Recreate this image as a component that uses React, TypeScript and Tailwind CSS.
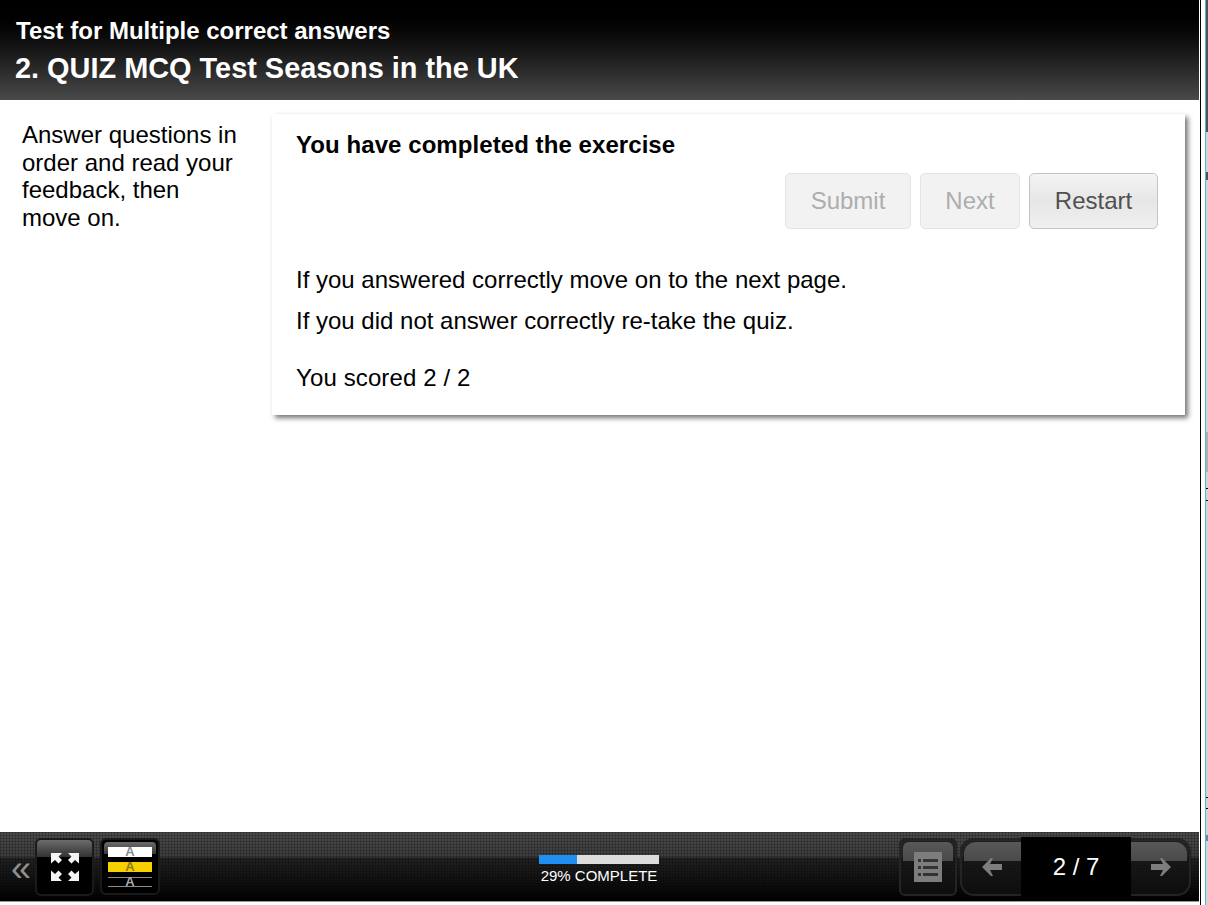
const font = "font-['Liberation_Sans',Arial,sans-serif]";

function ExpandIcon() {
  return (
    <svg width="30" height="30" viewBox="0 0 30 30" fill="#f4f4f4">
      <path d="M1 1h11l-3.500 3.500 3.500 3.500-3.500 3.500-3.500-3.500-4 3.500z" />
      <path d="M29 1h-11l3.500 3.500-3.500 3.500 3.500 3.500 3.500-3.500 4 3.500z" />
      <path d="M1 29h11l-3.500-3.500 3.500-3.500-3.500-3.500-3.500 3.500-4-3.500z" />
      <path d="M29 29h-11l3.500-3.500-3.500-3.500 3.500-3.500 3.500 3.500 4-3.500z" />
    </svg>
  );
}

function DimButton({ children, className, band }: { children: React.ReactNode; className: string; band: string }) {
  // disabled toolbar button: faint outline, lighter band across the top
  return (
    <div className={`relative flex items-center justify-center border-2 border-[#242424] bg-[#141414]/60 ${className}`}>
      <div className={`absolute top-[2px] h-[19px] bg-gradient-to-b from-[#585858] to-[#4a4a4a] ${band}`} />
      <div className="relative">{children}</div>
    </div>
  );
}

function ContrastRow({ bar, text }: { bar: string; text: string }) {
  return (
    <div className={`relative flex h-[10px] w-[44px] items-center justify-center text-[13px] leading-[10px] font-bold ${bar} ${text}`}>A</div>
  );
}

function ContrastIcon() {
  return (
    <div className={`relative flex h-[57px] w-[60px] flex-col items-center gap-[5px] rounded-[6px] border-2 border-[#1a1a1a] bg-black pt-[7px] ${font}`}>
      <div className="absolute inset-x-[2px] top-[2px] h-[12px] rounded-t-[4px] bg-gradient-to-b from-[#6a6a6a] to-[#3a3a3a]" />
      <ContrastRow bar="bg-white" text="text-[#8a8a8a]" />
      <ContrastRow bar="bg-[#f7d000]" text="text-[#8a7a20]" />
      <ContrastRow bar="border-y border-[#8a8a8a] bg-black" text="text-[#a8a8a8]" />
    </div>
  );
}

function NavArrow({ flip }: { flip?: boolean }) {
  return (
    <svg width="20" height="18" viewBox="0 0 20 18" fill="#7d7d7d" className={flip ? "-scale-x-100" : ""}>
      <path d="M9 0 L0 9 L9 18 L11 18 L8 12 H20 V6 H8 L11 0 Z" />
    </svg>
  );
}

export default function App() {
  return (
    <div className={`flex h-[905px] w-[1208px] overflow-hidden bg-white ${font}`}>
      <div className="flex w-[1199px] flex-col">
        {/* Title bar */}
        <header className="flex h-[100px] flex-col bg-gradient-to-b from-black to-[#4a4a4a] pl-[15px] pt-[17px] text-white">
          <div className="pl-px text-[24px] leading-[28px] font-bold">Test for Multiple correct answers</div>
          <div className="mt-[7px] text-[28.900px] leading-[32px] font-bold">2. QUIZ MCQ Test Seasons in the UK</div>
        </header>

        {/* Page body */}
        <main className="flex flex-1 items-start pl-[22px] pt-[14px]">
          <p className="mt-[7px] w-[225px] pr-[5px] text-[24px] leading-[27.500px] text-black">
            Answer questions in order and read your feedback, then move on.
          </p>
          <section className="ml-[25px] h-[301px] w-[913px] bg-white pl-[24px] pr-[27px] pt-[16px] shadow-[3px_3px_5px_rgba(0,0,0,0.55)]">
            <h2 className="text-[24px] leading-[30px] font-bold tracking-[0.07px] text-black">You have completed the exercise</h2>
            <div className="mt-[13px] flex justify-end gap-[9px] text-[24px]">
              <button type="button" className="h-[56px] w-[126px] rounded-[5px] border border-[#e4e4e4] bg-[#f2f2f2] text-[#adadad]">Submit</button>
              <button type="button" className="h-[56px] w-[100px] rounded-[5px] border border-[#e4e4e4] bg-[#f2f2f2] text-[#adadad]">Next</button>
              <button type="button" className="h-[56px] w-[129px] rounded-[5px] border border-[#c4c4c4] bg-gradient-to-b from-[#f4f4f4] via-[#e6e6e6] to-[#f0f0f0] text-[#505050]">Restart</button>
            </div>
            <p className="mt-[36px] text-[24px] leading-[30px] text-black">If you answered correctly move on to the next page.</p>
            <p className="mt-[11px] text-[24px] leading-[30px] text-black">If you did not answer correctly re-take the quiz.</p>
            <p className="mt-[27px] text-[24px] leading-[30px] tracking-[0.12px] text-black">You scored 2 / 2</p>
          </section>
        </main>

        {/* Bottom toolbar */}
        <footer className="relative flex h-[69px] items-center bg-[linear-gradient(to_bottom,#4a4a4a_0%,#3c3c3c_36%,#222222_38%,#000000_100%)]">
          <div className="pointer-events-none absolute inset-0 bg-[linear-gradient(to_right,rgba(0,0,0,0.2)_1px,transparent_1px),linear-gradient(to_bottom,rgba(0,0,0,0.2)_1px,transparent_1px)] bg-[length:3px_3px]" />
          <div className="relative flex h-full w-full items-center">
            <span className="ml-[11px] mt-[4px] w-[24px] text-[36px] leading-none text-[#8f8f8f]">«</span>
            <div className="relative flex h-[58px] w-[59px] items-center justify-center overflow-hidden rounded-[6px] border-2 border-[#1a1a1a] bg-black">
              <div className="absolute inset-x-0 top-0 h-[17px] bg-gradient-to-b from-[#6c6c6c] to-[#333333]" />
              <div className="relative"><ExpandIcon /></div>
            </div>
            <div className="ml-[6px]"><ContrastIcon /></div>

            <div className="ml-[379px] mt-[8px] flex w-[120px] flex-col items-center">
              <div className="flex h-[9px] w-[120px] bg-[#dddddd]">
                <div className="w-[38px] bg-[#1f8ff2]" />
              </div>
              <div className="mt-[2px] text-[15px] leading-[20px] whitespace-nowrap text-white">29% COMPLETE</div>
            </div>

            <DimButton className="ml-[240px] h-[58px] w-[58px] rounded-[6px]" band="inset-x-[2px] rounded-t-[6px]">
              <svg width="28" height="30" viewBox="0 0 28 30">
                <rect width="28" height="30" fill="#7d7d7d" />
                <path d="M4 7h3v3H4zM9 7h15v3H9zM4 14h3v3H4zM9 14h15v3H9zM4 21h3v3H4zM9 21h15v3H9z" fill="#333333" />
              </svg>
            </DimButton>
            <DimButton className="ml-[3px] h-[58px] w-[61px] rounded-l-[14px] border-r-0" band="left-[2px] right-0 rounded-tl-[12px]">
              <NavArrow />
            </DimButton>
            <div className="z-10 flex h-[60px] w-[110px] items-center justify-center bg-black text-[24px] text-white">2 / 7</div>
            <DimButton className="h-[58px] w-[60px] rounded-r-[14px] border-l-0 pl-px" band="left-0 right-[2px] rounded-tr-[12px]">
              <NavArrow flip />
            </DimButton>
          </div>
        </footer>
        <div className="h-[1px] bg-[#9a9a9a]" />
        <div className="h-[3px] bg-white" />
      </div>

      {/* Edge of the window behind */}
      <div className="flex w-[9px]">
        <div className="w-px bg-white" />
        <div className="w-px bg-black" />
        <div className="w-[4px] bg-white" />
        <div className="w-px bg-[#5fb4d6]" />
        <div className="flex w-[2px] flex-col bg-[#d4d4d4]">
          <div className="h-[132px] bg-[#4c5358]" />
          <div className="mt-[40px] h-[8px] bg-[#4c5358]" />
          <div className="mt-[252px] h-[40px] bg-[#b0b0b0]" />
          <div className="mt-[16px] h-px bg-black" />
          <div className="mt-[11px] h-px bg-black" />
          <div className="mt-[296px] h-px bg-black" />
          <div className="mt-[10px] h-px bg-black" />
          <div className="mt-[26px] h-[6px] bg-[#5f86a8]" />
        </div>
      </div>
    </div>
  );
}
